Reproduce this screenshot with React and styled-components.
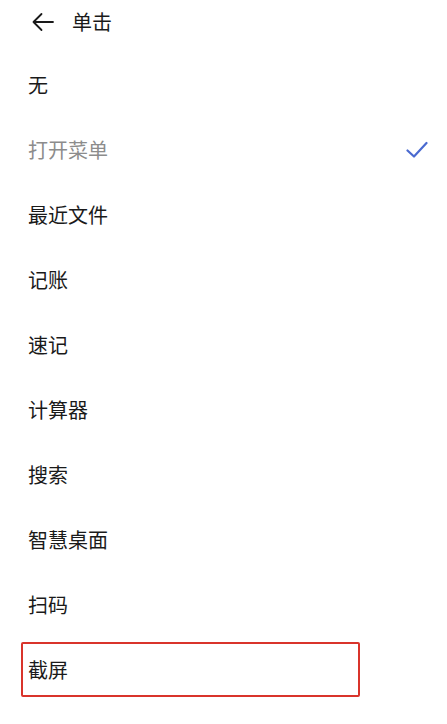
import React from 'react';
import styled, { createGlobalStyle } from 'styled-components';

const GlobalStyle = createGlobalStyle`
  body {
    margin: 0;
    background: #ffffff;
    font-family: "Noto Sans CJK SC", "Noto Sans", sans-serif;
  }
`;

const Page = styled.div`
  width: 447px;
  min-height: 724px;
  background: #fff;
`;

const Header = styled.div`
  height: 44px;
  display: flex;
  align-items: center;
  padding-left: 31px;
  gap: 17px;
`;

const Title = styled.div`
  font-size: 20px;
  color: #1a1a1a;
  line-height: 1;
`;

const List = styled.ul`
  margin: 0;
  padding: 8px 19px 0 28px;
  list-style: none;
`;

const Item = styled.li`
  height: 65px;
  display: flex;
  align-items: center;
  justify-content: space-between;
  font-size: 20px;
  color: ${p => (p.$selected ? '#8c8c8c' : '#1a1a1a')};
`;

const Boxed = styled(Item)`
  box-sizing: border-box;
  height: 55px;
  width: 339px;
  margin: 5px 0 5px -7px;
  padding-left: 5px;
  border: 2px solid #d9342b;
  border-radius: 2px;
`;

const items = ['无', '打开菜单', '最近文件', '记账', '速记', '计算器', '搜索', '智慧桌面', '扫码'];

function Check() {
  return (
    <svg width="22" height="18" viewBox="0 0 22 18">
      <path d="M1.5 9.5 L8 15.5 L20.5 2" fill="none" stroke="#4a6ad0" strokeWidth="2.2" strokeLinecap="round" strokeLinejoin="round" />
    </svg>
  );
}

function Back() {
  return (
    <svg width="24" height="20" viewBox="0 0 24 20">
      <path d="M22 10 H2.5 M10.5 2 L2.5 10 L10.5 18" fill="none" stroke="#1a1a1a" strokeWidth="1.8" strokeLinecap="round" strokeLinejoin="round" />
    </svg>
  );
}

export default function App() {
  return (
    <Page>
      <GlobalStyle />
      <Header>
        <Back />
        <Title>单击</Title>
      </Header>
      <List>
        {items.map(name => (
          <Item key={name} $selected={name === '打开菜单'}>
            {name}
            {name === '打开菜单' && <Check />}
          </Item>
        ))}
        <Boxed>截屏</Boxed>
      </List>
    </Page>
  );
}
